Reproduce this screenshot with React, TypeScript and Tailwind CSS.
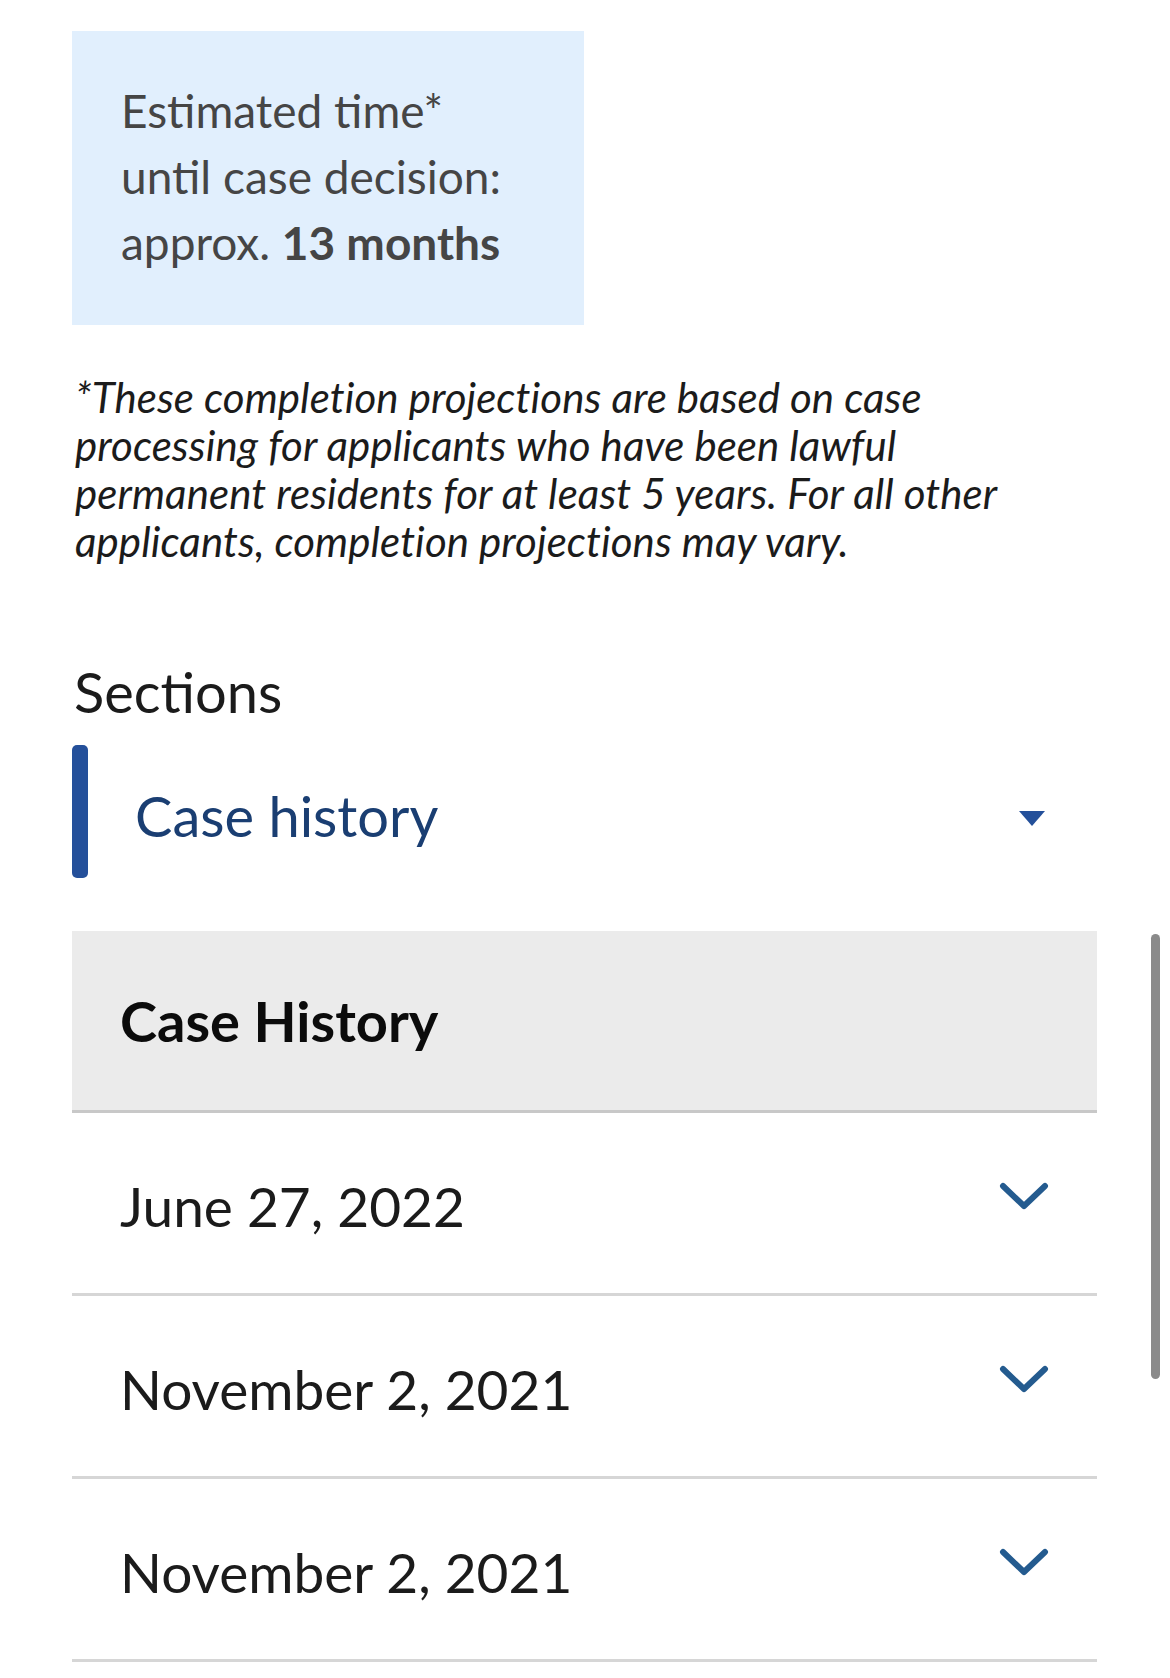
import React from 'react';

const rows = ['June 27, 2022', 'November 2, 2021', 'November 2, 2021'];

const Chevron = () => (
  <svg width="52" height="30" viewBox="0 0 52 30" fill="none">
    <path d="M5 5 L26 25 L47 5" stroke="#245b8f" strokeWidth="6" strokeLinecap="round" strokeLinejoin="round" />
  </svg>
);

export default function App() {
  return (
    <div className="relative min-h-[1678px] w-[1170px] bg-white font-['Lato','Liberation_Sans',sans-serif]">
      <div className="w-[1097px] pl-[72px] pt-[31px]">
        {/* Estimate box */}
        <div className="w-[512px] bg-[#e1effd] px-[49px] pb-[49px] pt-[47px] text-[46px] leading-[66px] text-[#454545]">
          <div>Estimated time*</div>
          <div>until case decision:</div>
          <div>
            approx. <span className="font-bold">13 months</span>
          </div>
        </div>

        {/* Footnote */}
        <p className="mt-[48px] pl-[3px] text-[42px] italic leading-[48px] tracking-[0.1px] text-[#1b1b1b]">
          *These completion projections are based on case
          <br />
          processing for applicants who have been lawful
          <br />
          permanent residents for at least 5 years. For all other
          <br />
          applicants, completion projections may vary.
        </p>

        {/* Sections */}
        <h2 className="mt-[97px] pl-[2px] text-[56px] leading-[60px] text-[#1b1b1b]">Sections</h2>

        <div className="mt-[23px] flex h-[133px] items-center">
          <div className="h-full w-[16px] rounded-[5px] bg-[#24509a]" />
          <div className="flex flex-1 items-center justify-between pl-[47px] pr-[52px] pt-[8px]">
            <span className="text-[56px] text-[#1a3e72]">Case history</span>
            <svg width="26" height="15" viewBox="0 0 26 15" className="mt-[6px]">
              <path d="M0 0 H26 L13 15 Z" fill="#24509a" />
            </svg>
          </div>
        </div>

        {/* Case history table */}
        <div className="mt-[53px]">
          <div className="flex h-[182px] items-center border-b-[3px] border-[#c8c8c8] bg-[#ebebeb] pl-[48px]">
            <span className="text-[56px] font-bold text-[#0b0b0b]">Case History</span>
          </div>
          {rows.map((r, i) => (
            <div key={i} className="flex h-[183px] items-center justify-between border-b-[3px] border-[#d6d6d6] pl-[48px] pr-[47px]">
              <span className="pt-[6px] text-[55px] text-[#1b1b1b]">{r}</span>
              <div className="-mt-[14px]">
                <Chevron />
              </div>
            </div>
          ))}
        </div>
      </div>

      {/* Scrollbar */}
      <div className="absolute left-[1151px] top-[934px] h-[445px] w-[9px] rounded-full bg-[#8a8a8a]" />
    </div>
  );
}
